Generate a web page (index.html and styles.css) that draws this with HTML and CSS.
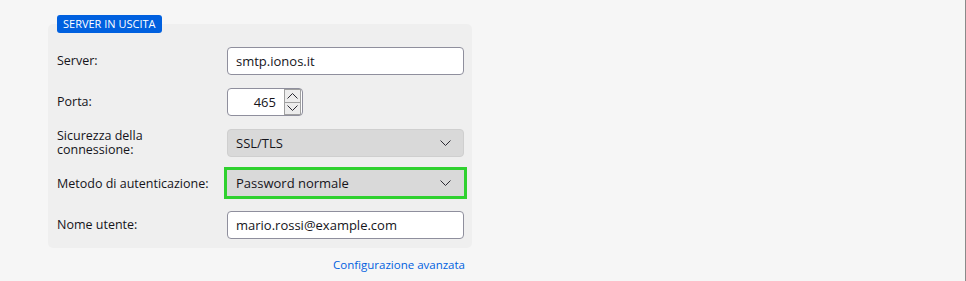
FILE: index.html
```html
<!DOCTYPE html>
<html lang="it">
<head>
    <meta charset="UTF-8">
    <title>Server in uscita</title>
    <link rel="stylesheet" href="styles.css">
</head>
<body>
    <div class="page">
        <section class="outgoing">
            <span class="badge">SERVER IN USCITA</span>
            <div class="panel">
                <div class="row">
                    <label class="label">Server:</label>
                    <div class="field">smtp.ionos.it</div>
                </div>
                <div class="row">
                    <label class="label">Porta:</label>
                    <div class="number">
                        <span class="number-value">465</span>
                        <span class="spin">
                            <span class="spin-btn">
                                <svg width="11" height="6" viewBox="0 0 11 6"><path d="M0.5 5.5 L5.5 0.5 L10.5 5.5" fill="none" stroke="#2b2a33" stroke-width="1"/></svg>
                            </span>
                            <span class="spin-btn">
                                <svg width="11" height="6" viewBox="0 0 11 6"><path d="M0.5 0.5 L5.5 5.5 L10.5 0.5" fill="none" stroke="#2b2a33" stroke-width="1"/></svg>
                            </span>
                        </span>
                    </div>
                </div>
                <div class="row">
                    <label class="label">Sicurezza della connessione:</label>
                    <div class="select">
                        <span>SSL/TLS</span>
                        <svg width="11" height="6" viewBox="0 0 11 6"><path d="M0.5 0.5 L5.5 5.5 L10.5 0.5" fill="none" stroke="#2b2a33" stroke-width="1"/></svg>
                    </div>
                </div>
                <div class="row">
                    <label class="label">Metodo di autenticazione:</label>
                    <div class="select focused">
                        <span>Password normale</span>
                        <svg width="11" height="6" viewBox="0 0 11 6"><path d="M0.5 0.5 L5.5 5.5 L10.5 0.5" fill="none" stroke="#2b2a33" stroke-width="1"/></svg>
                    </div>
                </div>
                <div class="row">
                    <label class="label">Nome utente:</label>
                    <div class="field">mario.rossi@example.com</div>
                </div>
            </div>
            <div class="links">
                <a class="advanced" href="#">Configurazione avanzata</a>
            </div>
        </section>
    </div>
</body>
</html>
```

FILE: styles.css
```css
body {
    margin: 0;
    background-color: #f6f6f6;
    color: #15141a;
    font-family: "Open Sans", "Noto Sans", sans-serif;
    font-size: 12.5px;
}
.page {
    height: 281px;
    border-right: 1px solid #8a8a8a;
    box-sizing: border-box;
    padding-top: 15px;
}
.outgoing {
    margin-left: 48px;
    width: 424px;
}
.badge {
    position: relative;
    z-index: 1;
    display: block;
    width: fit-content;
    margin-left: 9px;
    padding: 0 6px;
    height: 18px;
    line-height: 18px;
    background-color: #0060df;
    color: white;
    font-size: 11px;
    border-radius: 3px;
}
.panel {
    margin-top: -9px;
    padding: 23px 8px 9px 9px;
    background-color: #efefef;
    border-radius: 5px;
    display: flex;
    flex-direction: column;
    gap: 13px;
}
.row {
    display: grid;
    grid-template-columns: 160px 237px;
    column-gap: 10px;
    align-items: center;
    min-height: 28px;
}
.label {
    line-height: 14px;
    padding-right: 4px;
}
.field {
    height: 28px;
    box-sizing: border-box;
    padding: 0 8px;
    line-height: 26px;
    font-size: 13px;
    background-color: white;
    border: 1px solid #8f8f9d;
    border-radius: 4px;
}
.number {
    display: flex;
    align-items: center;
    width: 76px;
    height: 28px;
    box-sizing: border-box;
    padding-right: 1px;
    font-size: 13px;
    background-color: white;
    border: 1px solid #8f8f9d;
    border-radius: 4px;
}
.number-value {
    flex: 1;
    text-align: right;
    padding-right: 8px;
}
.spin {
    display: flex;
    flex-direction: column;
    width: 15px;
    height: 24px;
    border: 1px solid #a0a0a0;
}
.spin-btn {
    flex: 1;
    display: flex;
    align-items: center;
    justify-content: center;
    background-color: #ececec;
}
.spin-btn + .spin-btn {
    border-top: 1px solid #a0a0a0;
}
.select {
    display: flex;
    align-items: center;
    justify-content: space-between;
    height: 28px;
    box-sizing: border-box;
    padding: 0 12px 0 8px;
    font-size: 13px;
    background-color: #d9d9d9;
    border: 1px solid #cfcfcf;
    border-radius: 4px;
}
.select.focused {
    height: 26px;
    margin-bottom: 2px;
    border-color: #d9d9d9;
    border-radius: 0;
    outline: 3px solid #2fd12f;
    outline-offset: 0;
}
.links {
    display: flex;
    justify-content: flex-end;
    padding: 9px 7px 0 0;
}
.advanced {
    color: #0061e0;
    font-size: 11.5px;
    text-decoration: none;
}
```
